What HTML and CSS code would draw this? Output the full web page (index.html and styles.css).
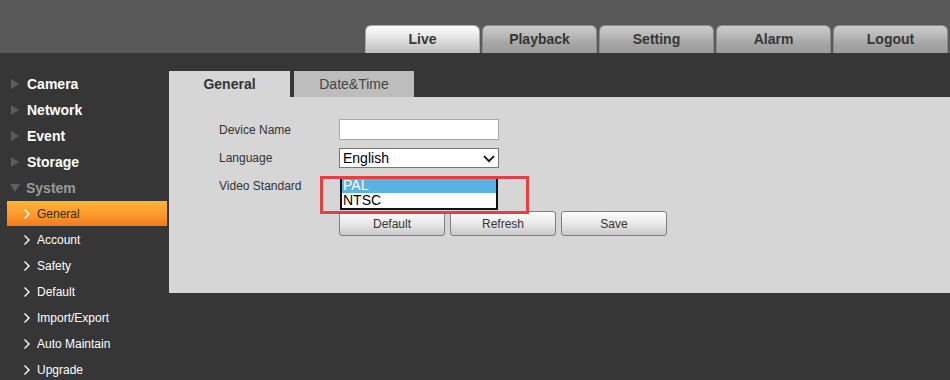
FILE: index.html
```html
<!DOCTYPE html>
<html>
<head>
<meta charset="utf-8">
<link rel="stylesheet" href="styles.css">
</head>
<body>
<header class="topbar">
  <nav class="mainnav">
    <div class="mtab active">Live</div>
    <div class="mtab">Playback</div>
    <div class="mtab">Setting</div>
    <div class="mtab">Alarm</div>
    <div class="mtab">Logout</div>
  </nav>
</header>
<div class="body">
  <aside class="sidebar">
    <div class="group"><span class="tri"></span>Camera</div>
    <div class="group"><span class="tri"></span>Network</div>
    <div class="group"><span class="tri"></span>Event</div>
    <div class="group"><span class="tri"></span>Storage</div>
    <div class="group open"><span class="tri down"></span>System</div>
    <div class="sub current"><svg class="chev" viewBox="0 0 8 12" width="8" height="12"><path d="M1.5 1.5 L6 6 L1.5 10.5" fill="none" stroke="#fff" stroke-width="1.4"/></svg>General</div>
    <div class="sub"><svg class="chev" viewBox="0 0 8 12" width="8" height="12"><path d="M1.5 1.5 L6 6 L1.5 10.5" fill="none" stroke="#fff" stroke-width="1.4"/></svg>Account</div>
    <div class="sub"><svg class="chev" viewBox="0 0 8 12" width="8" height="12"><path d="M1.5 1.5 L6 6 L1.5 10.5" fill="none" stroke="#fff" stroke-width="1.4"/></svg>Safety</div>
    <div class="sub"><svg class="chev" viewBox="0 0 8 12" width="8" height="12"><path d="M1.5 1.5 L6 6 L1.5 10.5" fill="none" stroke="#fff" stroke-width="1.4"/></svg>Default</div>
    <div class="sub"><svg class="chev" viewBox="0 0 8 12" width="8" height="12"><path d="M1.5 1.5 L6 6 L1.5 10.5" fill="none" stroke="#fff" stroke-width="1.4"/></svg>Import/Export</div>
    <div class="sub"><svg class="chev" viewBox="0 0 8 12" width="8" height="12"><path d="M1.5 1.5 L6 6 L1.5 10.5" fill="none" stroke="#fff" stroke-width="1.4"/></svg>Auto Maintain</div>
    <div class="sub"><svg class="chev" viewBox="0 0 8 12" width="8" height="12"><path d="M1.5 1.5 L6 6 L1.5 10.5" fill="none" stroke="#fff" stroke-width="1.4"/></svg>Upgrade</div>
  </aside>
  <main class="main">
    <div class="subtabs">
      <div class="stab active">General</div>
      <div class="stab">Date&amp;Time</div>
    </div>
    <section class="panel">
      <div class="form">
        <div class="lbl">Device Name</div>
        <div class="ctl"><div class="textbox"></div></div>
        <div class="lbl">Language</div>
        <div class="ctl">
          <div class="select">English
            <svg class="sel-arrow" viewBox="0 0 12 8" width="12" height="8"><path d="M1 1.2 L6 6.2 L11 1.2" fill="none" stroke="#111" stroke-width="1.8"/></svg>
          </div>
        </div>
        <div class="lbl lbl-vs">Video Standard</div>
        <div class="ctl ctl-vs">
          <div class="listbox">
            <div class="opt sel">PAL</div>
            <div class="opt">NTSC</div>
          </div>
          <div class="highlight-box"></div>
        </div>
      </div>
      <div class="buttons">
        <button class="btn">Default</button>
        <button class="btn">Refresh</button>
        <button class="btn">Save</button>
      </div>
    </section>
  </main>
</div>
</body>
</html>
```

FILE: styles.css
```css
* { box-sizing: border-box; }
html, body { margin: 0; padding: 0; }
body {
  width: 950px;
  height: 380px;
  overflow: hidden;
  background: #363636;
  font-family: "Liberation Sans", Arial, sans-serif;
}
.topbar {
  height: 53px;
  background: #595959;
  display: flex;
  justify-content: flex-end;
  align-items: flex-end;
  padding-right: 2px;
}
.mainnav { display: flex; gap: 2px; }
.mtab {
  width: 115px;
  height: 28px;
  border-radius: 6px 6px 0 0;
  background: linear-gradient(#cdcdcd, #a3a3a3 70%, #9c9c9c);
  border: 1px solid #8a8a8a;
  border-bottom: none;
  color: #363636;
  font-weight: bold;
  font-size: 14px;
  display: flex;
  align-items: center;
  justify-content: center;
  padding-bottom: 1px;
}
.mtab.active {
  background: linear-gradient(#ffffff, #e2e2e2 45%, #bdbdbd);
  border-color: #a8a8a8;
}
.body { display: flex; }
.sidebar {
  width: 169px;
  flex: none;
  padding-top: 18px;
}
.group {
  height: 26px;
  display: flex;
  align-items: center;
  color: #fff;
  font-weight: bold;
  font-size: 14px;
  padding-left: 11px;
}
.group.open { color: #9a9a9a; }
.tri {
  width: 0; height: 0;
  border-top: 5px solid transparent;
  border-bottom: 5px solid transparent;
  border-left: 8px solid #5c5c5c;
  margin-right: 8px;
}
.tri.down {
  border-left: 5px solid transparent;
  border-right: 5px solid transparent;
  border-top: 8px solid #5e5e5e;
  border-bottom: 0;
  margin-right: 6px;
  margin-left: -1px;
}
.sub {
  height: 26px;
  display: flex;
  align-items: center;
  margin: 0 2px 0 7px;
  padding-left: 16px;
  color: #fff;
  font-size: 12px;
}
.sub .chev { margin-right: 6px; }
.sub.current {
  height: 25px;
  margin-bottom: 1px;
  padding-top: 1px;
  background: linear-gradient(#ffb43c, #fb9a2c 55%, #f17a1f);
  color: #3b2610;
}
.main { flex: 1; padding-top: 18px; }
.subtabs { display: flex; gap: 4px; height: 26px; }
.stab {
  width: 121px;
  display: flex;
  align-items: center;
  justify-content: center;
  font-size: 14px;
  color: #444;
  background: #bdbdbd;
}
.stab + .stab { width: 120px; }
.stab.active { background: #d6d6d6; color: #333; font-weight: bold; }
.panel {
  background: #d6d6d6;
  height: 196px;
  padding: 22px 0 0 50px;
}
.form {
  display: grid;
  grid-template-columns: 120px 160px;
  row-gap: 0;
  font-size: 12px;
  color: #333;
}
.lbl { display: flex; align-items: center; }
.textbox {
  width: 160px;
  height: 21px;
  background: #fff;
  border: 1px solid #a9a9a9;
}
.form > .ctl:nth-child(4) { padding-top: 8px; }
.form > .lbl:nth-child(3) { padding-top: 8px; }
.select {
  width: 160px;
  height: 20px;
  background: #fff;
  border: 1px solid #767676;
  font-size: 14px;
  color: #000;
  display: flex;
  align-items: center;
  padding-left: 3px;
  position: relative;
}
.sel-arrow { position: absolute; right: 3px; top: 6px; }
.lbl-vs { align-items: flex-start; padding-top: 11px; }
.ctl-vs { position: relative; padding-top: 10px; }
.listbox {
  margin-left: 1px;
  width: 158px;
  background: #fff;
  border: 2px solid #111;
  border-top: 0;
  font-size: 14px;
  color: #000;
}
.opt { height: 15px; line-height: 15px; padding-left: 1px; }
.opt.sel { background: #59b2e2; color: #fff; }
.highlight-box {
  position: absolute;
  left: -19px;
  top: 8px;
  width: 209px;
  height: 38px;
  border: 3px solid #e5403e;
}
.buttons {
  display: flex;
  gap: 5px;
  margin-left: 120px;
  margin-top: 1px;
}
.btn {
  width: 106px;
  height: 25px;
  border: 1px solid #7e7e7e;
  border-radius: 3px;
  background: linear-gradient(#fdfdfd, #e9e9e9 50%, #c9c9c9);
  font-family: "Liberation Sans", Arial, sans-serif;
  font-size: 12px;
  color: #333;
  padding: 0;
}
```
